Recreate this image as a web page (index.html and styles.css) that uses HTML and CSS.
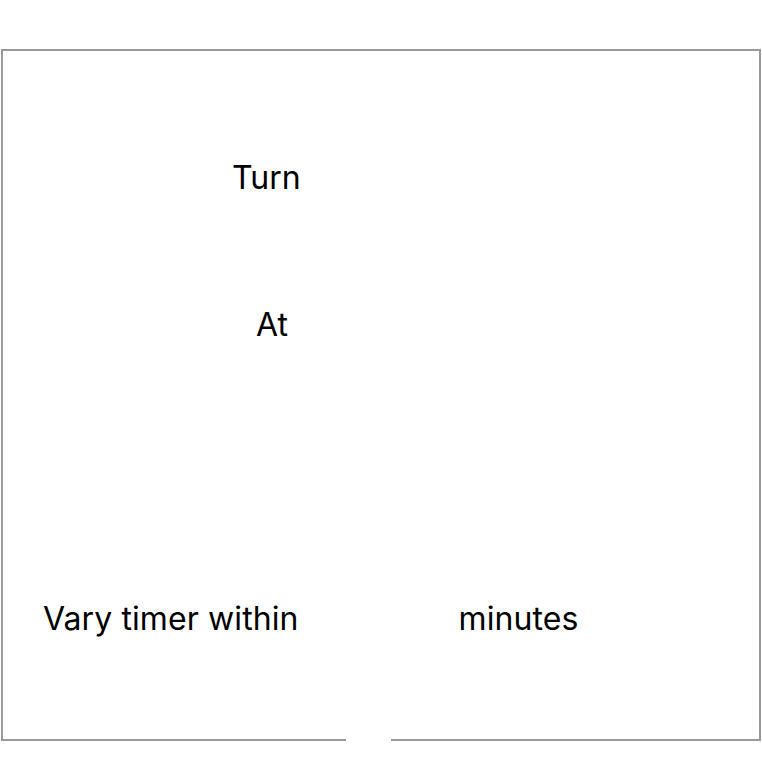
FILE: index.html
```html
<!DOCTYPE html>
<html>
<head>
<meta charset="utf-8">
<link rel="stylesheet" href="styles.css">
</head>
<body>
<div class="panel">
  <div class="row row-turn"><span class="label">Turn</span></div>
  <div class="row row-at"><span class="label">At</span></div>
  <div class="row row-vary">
    <span class="label">Vary timer within</span>
    <span class="unit">minutes</span>
  </div>
  <div class="notch"></div>
</div>
</body>
</html>
```
FILE: styles.css
```css
html, body {
  margin: 0;
  padding: 0;
  background: #fff;
}
body {
  font-family: Inter, "Noto Sans", "Liberation Sans", sans-serif;
  color: #000;
  padding-top: 49px;
  padding-left: 1px;
}
.panel {
  position: relative;
  box-sizing: border-box;
  width: 760px;
  height: 692px;
  border: 2px solid #999;
  display: flex;
  flex-direction: column;
}
.row {
  display: flex;
  font-size: 32px;
  line-height: 40px;
  height: 40px;
}
.row-turn {
  margin-top: 107px;
  padding-left: 229px;
}
.row-at {
  margin-top: 107px;
  padding-left: 253px;
}
.row-vary {
  margin-top: 254px;
  padding-left: 40px;
  letter-spacing: 0.1px;
}
.unit {
  margin-left: 160px;
}
.notch {
  position: absolute;
  left: 343px;
  bottom: -3px;
  width: 45px;
  height: 5px;
  background: #fff;
}
```
